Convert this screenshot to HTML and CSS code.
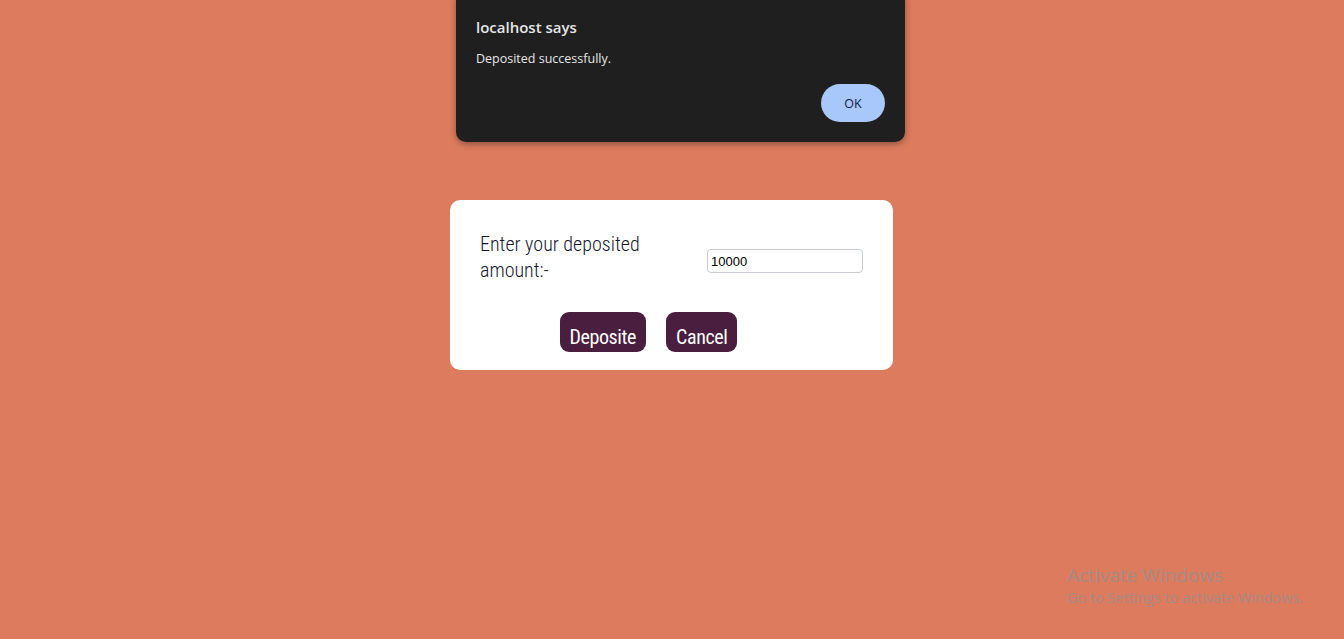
FILE: index.html
```html
<!DOCTYPE html>
<html>
<head>
<meta charset="utf-8">
<link rel="stylesheet" href="styles.css">
</head>
<body>
<main class="page">
  <form class="card">
    <div class="row">
      <label class="label" for="amt">Enter your deposited amount:-</label>
      <input class="input" id="amt" type="text" value="10000">
    </div>
    <div class="actions">
      <button type="button" class="btn">Deposite</button>
      <button type="button" class="btn">Cancel</button>
    </div>
  </form>
</main>
<div class="alert">
  <div class="alert-title">localhost says</div>
  <div class="alert-msg">Deposited successfully.</div>
  <div class="alert-actions"><button class="ok" type="button">OK</button></div>
</div>
<div class="watermark">
  <div class="wm-title">Activate Windows</div>
  <div class="wm-sub">Go to Settings to activate Windows.</div>
</div>
</body>
</html>
```
FILE: styles.css
```css
html, body { margin: 0; padding: 0; }
body {
  background: #dc7b5e;
  width: 1344px;
  height: 639px;
  overflow: hidden;
  position: relative;
  font-family: "Roboto", sans-serif;
}
.page {
  display: flex;
  justify-content: center;
  padding-top: 200px;
}
.card {
  width: 443px;
  height: 170px;
  box-sizing: border-box;
  background: #fff;
  border-radius: 10px;
  padding: 31px 30px 0 30px;
  margin: 0 1px 0 0;
}
.row {
  display: flex;
  align-items: center;
  justify-content: space-between;
}
.label {
  width: 190px;
  font-family: "Roboto", sans-serif;
  font-stretch: condensed;
  font-weight: 300;
  font-size: 20px;
  line-height: 26px;
  color: #14182e;
}
.input {
  width: 156px;
  height: 24px;
  box-sizing: border-box;
  border: 1px solid #c8ccd2;
  border-radius: 4px;
  font-family: "Liberation Sans", Arial, sans-serif;
  font-size: 13px;
  padding: 2px 3px;
  color: #000;
  margin-top: 8px;
}
.actions {
  display: flex;
  justify-content: center;
  gap: 20px;
  margin-top: 29px;
  padding-right: 46px;
}
.btn {
  height: 40px;
  border: none;
  border-radius: 9px;
  background: #4a1e3f;
  color: #fff;
  font-family: "Roboto", sans-serif;
  font-stretch: condensed;
  font-weight: 400;
  font-size: 20px;
  letter-spacing: -0.4px;
  padding: 9px 10px 0;
}
.alert {
  position: absolute;
  left: 456px;
  top: -10px;
  width: 449px;
  height: 152px;
  box-sizing: border-box;
  background: #1f1f1f;
  border-radius: 10px;
  box-shadow: 0 2px 6px rgba(0,0,0,0.35);
  padding: 27px 20px 0 20px;
  font-family: "Open Sans", "Noto Sans", sans-serif;
  color: #e6e6e6;
}
.alert-title {
  font-size: 15px;
  font-weight: 600;
  line-height: 20px;
}
.alert-msg {
  font-size: 12.5px;
  line-height: 18px;
  margin-top: 13px;
}
.alert-actions {
  display: flex;
  justify-content: flex-end;
  margin-top: 16px;
}
.ok {
  width: 64px;
  height: 38px;
  border: none;
  border-radius: 19px;
  background: #a8c7fa;
  color: #0b1d48;
  font-family: "Open Sans", "Noto Sans", sans-serif;
  font-size: 12.5px;
  font-weight: 500;
}
.watermark {
  position: absolute;
  left: 1067px;
  top: 563px;
  font-family: "Open Sans", "Noto Sans", sans-serif;
  color: #a88b82;
}
.wm-title { font-size: 19px; line-height: 24px; }
.wm-sub { font-size: 14.4px; line-height: 21px; }
```
